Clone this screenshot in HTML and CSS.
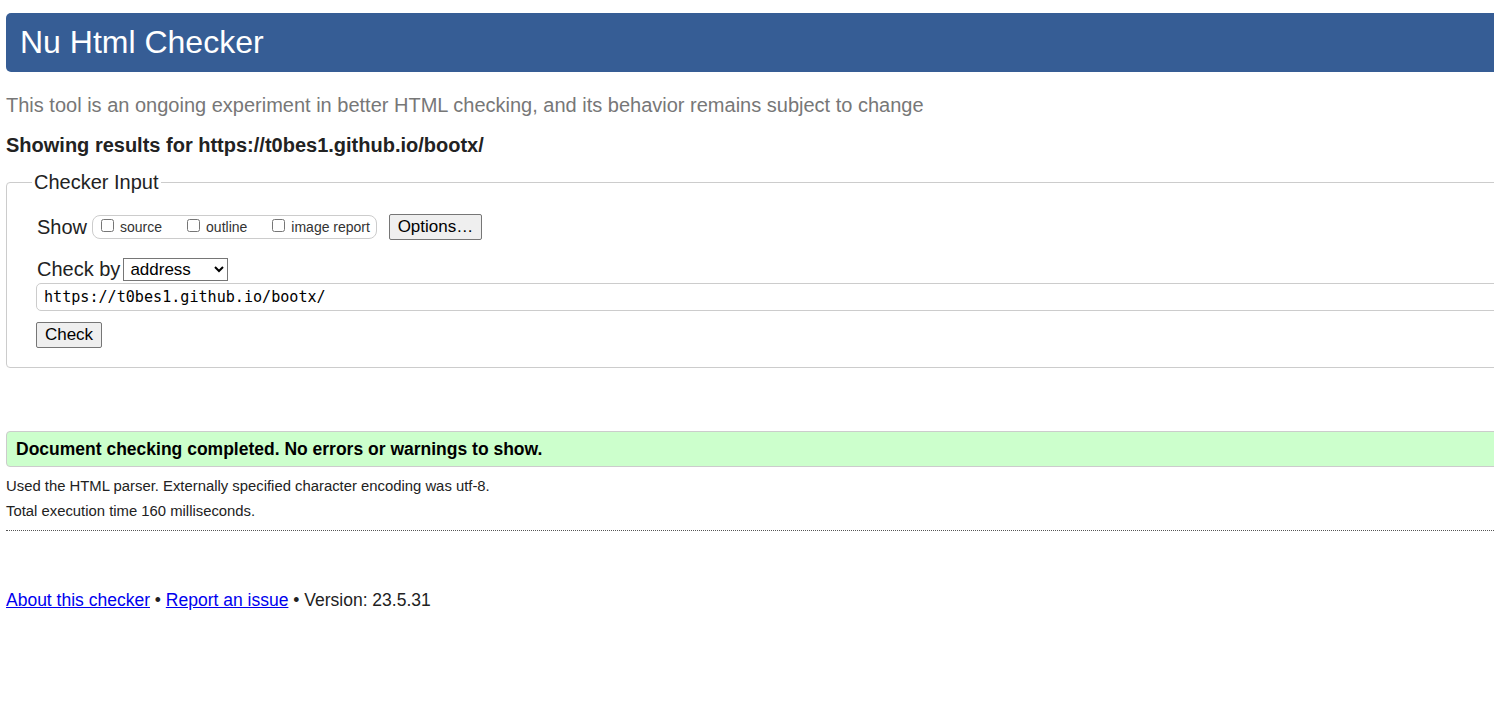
FILE: index.html
```html
<!DOCTYPE html>
<html lang="en">
<head>
<meta charset="utf-8">
<title>Nu Html Checker</title>
<link rel="stylesheet" href="styles.css">
</head>
<body>
<div class="page">
  <h1 class="title">Nu Html Checker</h1>
  <p class="about">This tool is an ongoing experiment in better HTML checking, and its behavior remains subject to change</p>
  <p class="showing">Showing results for https://t0bes1.github.io/bootx/</p>
  <fieldset class="input-box">
    <legend class="legend">Checker Input</legend>
    <div class="row show-row">
      <span class="row-label">Show</span>
      <span class="opts">
        <label class="opt"><input type="checkbox" class="cb"><span>source</span></label>
        <label class="opt"><input type="checkbox" class="cb"><span>outline</span></label>
        <label class="opt"><input type="checkbox" class="cb"><span>image report</span></label>
      </span>
      <button class="btn options-btn" type="button">Options…</button>
    </div>
    <div class="row checkby-row">
      <span class="row-label">Check by</span>
      <select class="sel"><option>address</option></select>
    </div>
    <input class="url" type="text" value="https://t0bes1.github.io/bootx/">
    <div class="submit-row">
      <button class="btn check-btn" type="button">Check</button>
    </div>
  </fieldset>
  <div class="success">Document checking completed. No errors or warnings to show.</div>
  <p class="detail first">Used the HTML parser. Externally specified character encoding was utf-8.</p>
  <p class="detail">Total execution time 160 milliseconds.</p>
  <hr class="sep">
  <p class="footer"><a href="#">About this checker</a> • <a href="#">Report an issue</a> • Version: 23.5.31</p>
</div>
</body>
</html>
```
FILE: styles.css
```css
html, body {
  margin: 0;
  padding: 0;
  overflow: hidden;
  background: #fff;
}
body {
  font-family: "Liberation Sans", Arial, sans-serif;
  color: #222;
}
.page {
  width: 1620px;
  padding-left: 6px;
  padding-top: 13px;
}
.title {
  margin: 0;
  height: 59px;
  line-height: 59px;
  padding-left: 14px;
  background: #365d95;
  color: #fff;
  font-size: 32px;
  font-weight: normal;
  border-radius: 5px 0 0 5px;
}
.about {
  margin: 22px 0 0;
  font-size: 20px;
  line-height: 23px;
  color: #777;
}
.showing {
  margin: 17px 0 0;
  font-size: 20px;
  line-height: 22px;
  font-weight: bold;
  color: #222;
}
.input-box {
  margin: 15px 0 0;
  border: 1px solid #ccc;
  border-radius: 4px;
  padding: 21px 0 19px 30px;
}
.legend {
  font-size: 20px;
  padding: 0 2px;
  margin-left: -5px;
  color: #222;
  line-height: 22px;
}
.row {
  display: flex;
  align-items: center;
}
.row-label {
  font-size: 20px;
  line-height: 22px;
}
.show-row {
  height: 26px;
}
.opts {
  display: inline-flex;
  align-items: center;
  margin-left: 5px;
  height: 22px;
  border: 1px solid #ccc;
  border-radius: 8px;
  padding: 0 6px 0 8px;
  gap: 25px;
}
.opt {
  display: inline-flex;
  align-items: center;
  font-size: 14px;
  color: #333;
}
.cb {
  margin: 0 6px 4px 0;
  width: 13px;
  height: 13px;
}
.btn {
  font-family: "Liberation Sans", Arial, sans-serif;
  font-size: 17px;
  color: #000;
  background: #efefef;
  border: 1px solid #767676;
  border-radius: 2px;
  padding: 0 9px;
  height: 26px;
}
.options-btn {
  margin-left: 12px;
  width: 93px;
  padding: 0;
}
.checkby-row {
  margin-top: 18px;
  height: 22px;
}
.sel {
  margin-left: 3px;
  font-family: "Liberation Sans", Arial, sans-serif;
  font-size: 17px;
  height: 23px;
  width: 105px;
  border: 1px solid #767676;
  border-radius: 0;
  background: #fff;
  color: #000;
  padding: 0 2px;
}
.url {
  display: block;
  box-sizing: border-box;
  margin: 3px 0 0 -1px;
  width: 1580px;
  height: 28px;
  border: 1px solid #ccc;
  border-radius: 5px;
  padding: 0 7px;
  font-family: "DejaVu Sans Mono", "Liberation Mono", monospace;
  font-size: 15.1px;
  color: #000;
}
.submit-row {
  margin-top: 11px;
  margin-left: -1px;
  display: flex;
}
.check-btn {
  width: 66px;
  padding: 0;
}
.success {
  margin-top: 63px;
  height: 34px;
  line-height: 34px;
  background: #ccffcc;
  border: 1px solid #ccc;
  border-radius: 4px;
  padding-left: 9px;
  font-weight: bold;
  font-size: 17.5px;
  color: #000;
}
.detail {
  margin: 0;
  font-size: 14.85px;
  line-height: 25px;
  color: #222;
}
.detail.first {
  margin-top: 7px;
}
.sep {
  margin: 6px 0 0;
  border: 0;
  border-top: 1px dotted #555;
  height: 0;
}
.footer {
  margin: 58px 0 0;
  font-size: 17.5px;
  line-height: 22px;
  color: #222;
}
.footer a {
  color: #00e;
}
```
